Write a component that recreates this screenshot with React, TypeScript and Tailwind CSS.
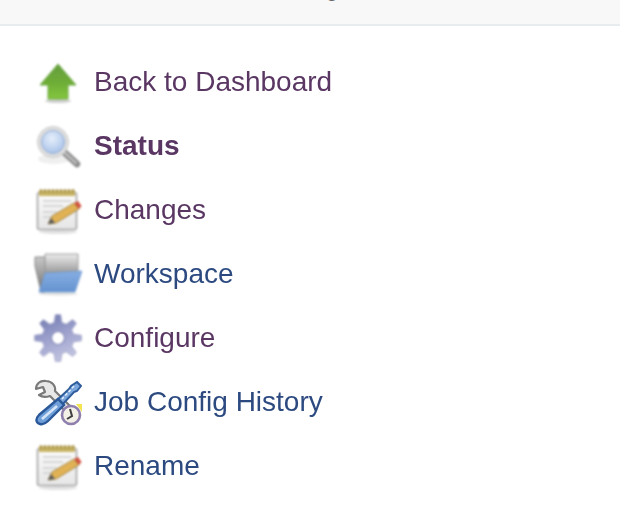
import type { ReactNode } from "react";

/**
 * Green "up" arrow used for the Back to Dashboard link.
 */
function ArrowIcon(): JSX.Element {
  return (
    <svg viewBox="0 0 48 48" className="h-12 w-12 blur-[0.8px]">
      <defs>
        <linearGradient id="arrow" x1="0" y1="0" x2="0" y2="1">
          <stop offset="0" stopColor="#649c3e" />
          <stop offset="0.55" stopColor="#6fae37" />
          <stop offset="1" stopColor="#84c63d" />
        </linearGradient>
      </defs>
      <ellipse cx="24" cy="43" rx="13" ry="2" fill="#cfcfcf" />
      <path d="M24 6 L42 27 L34 27 L34 41 L14 41 L14 27 L6 27 Z" fill="url(#arrow)" stroke="#6fa948" strokeWidth="1" strokeLinejoin="round" />
    </svg>
  );
}

/**
 * Magnifying glass used for the Status link.
 */
function SearchIcon(): JSX.Element {
  return (
    <svg viewBox="0 0 48 48" className="h-12 w-12 blur-[0.9px]">
      <defs>
        <radialGradient id="lens" cx="0.45" cy="0.35" r="0.7">
          <stop offset="0" stopColor="#e6effb" />
          <stop offset="1" stopColor="#a5c0e8" />
        </radialGradient>
      </defs>
      <ellipse cx="20" cy="37" rx="16" ry="5" fill="#efefef" />
      <path d="M29 29 L43 42" stroke="#8c8c8c" strokeWidth="6.5" strokeLinecap="round" />
      <path d="M31 31 L42 41" stroke="#c8c8c8" strokeWidth="2" strokeLinecap="round" />
      <circle cx="19" cy="20" r="15.5" fill="#dedede" stroke="#cccccc" strokeWidth="1" />
      <circle cx="19" cy="20" r="11.5" fill="url(#lens)" stroke="#95aed3" strokeWidth="1" />
    </svg>
  );
}

/**
 * Notepad with a pencil used for the Changes and Rename links.
 */
function NotepadIcon({ id }: { id: string }): JSX.Element {
  return (
    <svg viewBox="0 0 48 48" className="h-12 w-12 blur-[0.9px]">
      <defs>
        <linearGradient id={id} x1="0" y1="0" x2="0" y2="1">
          <stop offset="0" stopColor="#fbfbfb" />
          <stop offset="1" stopColor="#e6e6e6" />
        </linearGradient>
      </defs>
      <ellipse cx="24" cy="46" rx="19" ry="2" fill="#e2e2e2" />
      <rect x="3.5" y="6.5" width="39" height="37" rx="2" fill={`url(#${id})`} stroke="#a6a6a6" strokeWidth="1.6" />
      <rect x="5" y="4" width="36" height="6" fill="#c9b465" />
      <path d="M7 3v4M11 3v4M15 3v4M19 3v4M23 3v4M27 3v4M31 3v4M35 3v4M39 3v4" stroke="#9a8748" strokeWidth="1.3" />
      <path d="M9 15h28M9 20h20M9 26h14M9 31h9" stroke="#cdcdcd" strokeWidth="1.6" />
      <path d="M14 38 L18 30 L40 17 L45 23 L22 37 Z" fill="#e0b254" stroke="#96773a" strokeWidth="0.8" />
      <path d="M14 38 L17 32 L21 37 Z" fill="#5b5b5b" />
      <path d="M40 17 L44 15 L47.5 20 L45 23 Z" fill="#d0523e" />
    </svg>
  );
}

/**
 * Open folder used for the Workspace link.
 */
function FolderIcon(): JSX.Element {
  return (
    <svg viewBox="0 0 48 48" className="h-12 w-12 blur-[0.9px]">
      <defs>
        <linearGradient id="back" x1="0" y1="0" x2="0" y2="1">
          <stop offset="0" stopColor="#c8c8c8" />
          <stop offset="1" stopColor="#6f6f6f" />
        </linearGradient>
        <linearGradient id="paper" x1="0" y1="0" x2="0" y2="1">
          <stop offset="0" stopColor="#ececec" />
          <stop offset="1" stopColor="#9a9a9a" />
        </linearGradient>
        <linearGradient id="front" x1="0" y1="0" x2="0" y2="1">
          <stop offset="0" stopColor="#86aee2" />
          <stop offset="1" stopColor="#6593d0" />
        </linearGradient>
      </defs>
      <ellipse cx="24" cy="44" rx="20" ry="1.5" fill="#e0e0e0" />
      <path d="M1 7 H11 V42 H7 L1 16 Z" fill="url(#back)" stroke="#8a8a8a" strokeWidth="1" />
      <path d="M11 4 H44 V23 H11 Z" fill="url(#paper)" stroke="#9c9c9c" strokeWidth="1" />
      <path d="M11 23 L48 21 L41 42 L5 42 Z" fill="url(#front)" stroke="#6f97cc" strokeWidth="0.8" />
    </svg>
  );
}

// Outline of the eight toothed gear, one tapered tooth per 45 degrees.
const gearPath = [0, 45, 90, 135, 180, 225, 270, 315]
  .map((angle) => {
    const point = (offset: number, radius: number): string => {
      const rad = ((angle + offset - 90) * Math.PI) / 180;
      return `${(24 + radius * Math.cos(rad)).toFixed(2)} ${(24 + radius * Math.sin(rad)).toFixed(2)}`;
    };
    return `L${point(-14, 16)} L${point(-6.5, 23.5)} L${point(6.5, 23.5)} L${point(14, 16)}`;
  })
  .join(" ")
  .replace("L", "M");

/**
 * Blue-grey gear used for the Configure link.
 */
function GearIcon(): JSX.Element {
  return (
    <svg viewBox="0 0 48 48" className="h-12 w-12 blur-[0.9px]">
      <defs>
        <linearGradient id="gear" x1="0.2" y1="0" x2="0.6" y2="1">
          <stop offset="0" stopColor="#717bb0" />
          <stop offset="0.5" stopColor="#9ea2cd" />
          <stop offset="1" stopColor="#c4c6e2" />
        </linearGradient>
      </defs>
      <path d={`${gearPath} Z`} fill="url(#gear)" stroke="#9a9ec4" strokeWidth="0.8" />
      <circle cx="24" cy="24" r="6.5" fill="#ffffff" stroke="#8589b8" strokeWidth="1.2" />
    </svg>
  );
}

/**
 * Crossed wrench and screwdriver with a clock, used for Job Config History.
 */
function HistoryIcon(): JSX.Element {
  return (
    <svg viewBox="0 0 48 48" className="h-12 w-12 blur-[0.7px]">
      <path d="M12 3 C6 2 2 6 2 11 L9 9 L11 14 L5 17 C9 20 13 19 16 18 L33 35 L38 30 L21 13 C22 8 18 3 12 3 Z" fill="#e8e8e8" stroke="#7a7a7a" strokeWidth="2.2" strokeLinejoin="round" />
      <path d="M43 4 L47 8 L43 13 L40 14 L27 28 L22 23 L35 11 L37 8 Z" fill="#7ba7dc" stroke="#2f5d9c" strokeWidth="2" />
      <path d="M40 8 L28 21" stroke="#e2ecf8" strokeWidth="1.6" strokeDasharray="3 2" />
      <path d="M24 21 L5 37 C1 41 2 45 6 46 C9 47 12 45 14 43 L30 27 Z" fill="#6f9fd8" stroke="#2a5898" strokeWidth="2.4" />
      <path d="M8 41 L23 28" stroke="#d5e4f6" strokeWidth="2.6" />
      <circle cx="37" cy="37" r="9" fill="#f3f0e8" stroke="#8f7fad" strokeWidth="2.6" />
      <path d="M36 31 L38 38 L33 41" fill="none" stroke="#3f3f3f" strokeWidth="2" />
      <path d="M42 26 L48 26 L48 34 Z" fill="#f4e44f" />
    </svg>
  );
}

type NavItem = {
  icon: ReactNode;
  label: string;
  color: string;
  bold?: boolean;
};

const items: NavItem[] = [
  { icon: <ArrowIcon />, label: "Back to Dashboard", color: "text-[#5a3663]" },
  { icon: <SearchIcon />, label: "Status", color: "text-[#5a3663]", bold: true },
  { icon: <NotepadIcon id="paper-a" />, label: "Changes", color: "text-[#5a3663]" },
  { icon: <FolderIcon />, label: "Workspace", color: "text-[#2c4a80]" },
  { icon: <GearIcon />, label: "Configure", color: "text-[#5a3663]" },
  { icon: <HistoryIcon />, label: "Job Config History", color: "text-[#2c4a80]" },
  { icon: <NotepadIcon id="paper-b" />, label: "Rename", color: "text-[#2c4a80]" },
];

/**
 * App renders the Jenkins job side panel.
 *
 * @returns {JSX.Element} The component.
 */
export default function App(): JSX.Element {
  return (
    <main className="h-[506px] w-[620px] overflow-hidden bg-white font-['Liberation_Sans',Arial,sans-serif]">
      <div className="relative h-[26px] overflow-hidden border-b-2 border-[#e9ecee] bg-[#f8f8f8]">
        {/* Only the tail of a letter from the cut off header shows here. */}
        <span className="absolute left-[326px] top-[-22px] text-[22px] leading-none text-[#666666]">g</span>
      </div>
      <nav className="flex flex-col pl-[34px] pt-6">
        {items.map((item) => (
          <a key={item.label} className="flex h-16 items-center gap-3">
            {item.icon}
            <span className={`text-[28px] blur-[0.3px] ${item.color} ${item.bold ? "font-bold" : ""}`}>
              {item.label}
            </span>
          </a>
        ))}
      </nav>
    </main>
  );
}
